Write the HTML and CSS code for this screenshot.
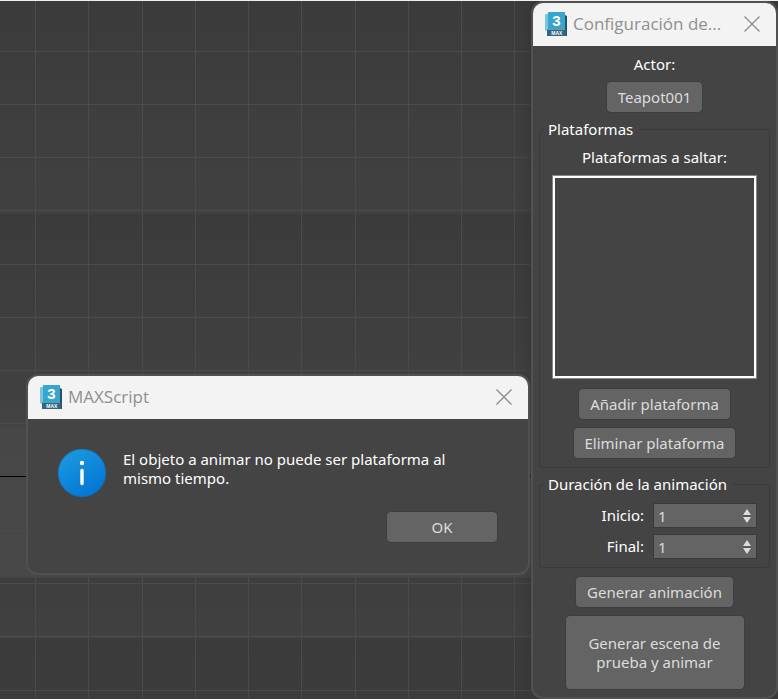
FILE: index.html
```html
<!DOCTYPE html>
<html lang="es">
<head>
<meta charset="utf-8">
<meta name="viewport" content="width=device-width, initial-scale=1">
<title>MAXScript</title>
<link rel="stylesheet" href="styles.css">
</head>
<body>
<main class="desktop">
  <svg class="grid" aria-hidden="true">
    <path class="grid-line" d="M35.500 0V2000M88.500 0V2000M142.500 0V2000M195.500 0V2000M248.500 0V2000M301.500 0V2000M355.500 0V2000M408.500 0V2000M461.500 0V2000M514.500 0V2000"/>
    <path class="grid-line" d="M0 51.500H4000M0 104.500H4000M0 157.500H4000M0 210.500H4000M0 264.500H4000M0 317.500H4000M0 370.500H4000M0 423.500H4000M0 530.500H4000M0 583.500H4000M0 636.500H4000M0 690.500H4000"/>
    <path class="grid-axis" d="M0 476.500H4000"/>
  </svg>

  <section class="window message" role="dialog" aria-labelledby="message-title">
    <header class="titlebar">
      <svg class="logo" viewBox="0 0 24 26" aria-hidden="true">
        <path d="M1 3.500l3-1v17H1z" fill="#7cc4dc"/>
        <path d="M4 1.500Q4 1 5 1H20.500q.5 0 .5.500V18.500H4z" fill="#37a5cc"/>
        <path d="M21 4l2 1V25H21z" fill="#22536a"/>
        <path d="M3 18.500H22V25H3z" fill="#336680"/>
        <text x="12.500" y="15" class="logo-digit">3</text>
        <text x="12.800" y="23.800" class="logo-word">MAX</text>
      </svg>
      <h1 class="title" id="message-title">MAXScript</h1>
      <button class="close" type="button" aria-label="Cerrar"><svg class="cross" viewBox="0 0 16 16"><path d="M.5.5l15 15M15.500.5l-15 15"/></svg></button>
    </header>
    <div class="message-body">
      <svg class="info" viewBox="0 0 48 48" aria-hidden="true">
        <defs>
          <linearGradient id="info-fill" x1="0.2" y1="0" x2="0.8" y2="1">
            <stop offset="0" stop-color="#1c9ae0"/>
            <stop offset="1" stop-color="#0273d4"/>
          </linearGradient>
        </defs>
        <circle cx="24" cy="24" r="24" fill="url(#info-fill)"/>
        <circle cx="24" cy="24" r="23.500" fill="none" stroke="#0668b4" stroke-opacity=".35"/>
        <circle cx="24" cy="14" r="2.200" fill="#fff"/>
        <path d="M24 21.500V34.500" stroke="#fff" stroke-width="3.400" stroke-linecap="round"/>
      </svg>
      <p class="message-text">El objeto a animar no puede ser plataforma al mismo tiempo.</p>
    </div>
    <div class="message-actions"><button class="btn ok" type="button">OK</button></div>
  </section>

  <section class="window panel" role="dialog" aria-labelledby="panel-title">
    <header class="titlebar">
      <svg class="logo" viewBox="0 0 24 26" aria-hidden="true">
        <path d="M1 3.500l3-1v17H1z" fill="#7cc4dc"/>
        <path d="M4 1.500Q4 1 5 1H20.500q.5 0 .5.500V18.500H4z" fill="#37a5cc"/>
        <path d="M21 4l2 1V25H21z" fill="#22536a"/>
        <path d="M3 18.500H22V25H3z" fill="#336680"/>
        <text x="12.500" y="15" class="logo-digit">3</text>
        <text x="12.800" y="23.800" class="logo-word">MAX</text>
      </svg>
      <h2 class="title" id="panel-title">Configuración de...</h2>
      <button class="close" type="button" aria-label="Cerrar"><svg class="cross" viewBox="0 0 16 16"><path d="M.5.5l15 15M15.500.5l-15 15"/></svg></button>
    </header>
    <form class="panel-body">
      <label class="caption" for="actor">Actor:</label>
      <button class="btn" id="actor" type="button">Teapot001</button>
      <fieldset class="group platforms">
        <legend class="legend">Plataformas</legend>
        <label class="caption" for="list">Plataformas a saltar:</label>
        <select class="list" id="list" size="8"></select>
        <button class="btn" type="button">Añadir plataforma</button>
        <button class="btn" type="button">Eliminar plataforma</button>
      </fieldset>
      <fieldset class="group duration">
        <legend class="legend">Duración de la animación</legend>
        <div class="field">
          <label for="start">Inicio:</label>
          <span class="spinner"><input class="number" id="start" type="number" value="1"><svg class="arrows" viewBox="0 0 8 16" aria-hidden="true"><path d="M4 1l4 6H0zM4 15l4-6H0z" fill="#dcdcdc"/><path d="M0 8h8" stroke="#4c4c4c"/></svg></span>
        </div>
        <div class="field">
          <label for="end">Final:</label>
          <span class="spinner"><input class="number" id="end" type="number" value="1"><svg class="arrows" viewBox="0 0 8 16" aria-hidden="true"><path d="M4 1l4 6H0zM4 15l4-6H0z" fill="#dcdcdc"/><path d="M0 8h8" stroke="#4c4c4c"/></svg></span>
        </div>
      </fieldset>
      <button class="btn generate" type="button">Generar animación</button>
      <button class="btn tall" type="button">Generar escena de prueba y animar</button>
    </form>
  </section>
</main>
</body>
</html>
```
FILE: styles.css
```css
* { box-sizing: border-box; }

body {
  margin: 0;
  background: #3c3c3c;
  color: #fff;
  font: 15px/19px "Noto Sans", sans-serif;
}

.desktop {
  position: relative;
  min-height: 100vh;
  overflow: hidden;
  border-top: 1px solid #f0f0f0;
  background: linear-gradient(#3b3b3b 0, #414141 212px, #3b3b3b 213px, #414141 400px, #444 427px, #474747 428px, #484848 576px, #3e3e3e 577px, #414141 637px, #3b3b3b 638px, #3c3c3c 100%);
}

.grid { position: absolute; top: -1px; left: 0; width: 100%; height: 100%; }
.grid-line { fill: none; stroke: #4b4b4b; }
.grid-axis { fill: none; stroke: #000; }

.window {
  position: absolute;
  display: flex;
  flex-direction: column;
  border: 2px solid #515151;
  border-radius: 12px;
  background: #444;
  overflow: hidden;
}

.message { left: 26px; top: 373px; z-index: 1; width: 504px; }
.panel { right: 0; top: 0; width: 247px; box-shadow: 0 0 16px #333; }

.titlebar {
  display: flex;
  align-items: center;
  height: 43px;
  padding: 0 16px 2px 11px;
  background: #f3f3f3;
}

.logo { width: 24px; height: 26px; flex: none; }
.logo-digit { font: bold 15px "Liberation Sans", sans-serif; fill: #fff; text-anchor: middle; }
.logo-word { font: bold 5px "Liberation Sans", sans-serif; fill: #fff; text-anchor: middle; }

.title {
  flex: 1;
  margin: 0 0 0 5px;
  color: #8f8f8f;
  font: 17px/24px "Open Sans", "Noto Sans", sans-serif;
  white-space: nowrap;
}

.close { display: flex; padding: 0; border: 0; background: none; }
.cross { width: 16px; height: 16px; fill: none; stroke: #8c8c8c; stroke-width: 1.3; }

.message-body { display: flex; gap: 17px; padding: 30px 30px 0; }
.info { width: 48px; height: 48px; flex: none; }
.message-text { margin: 1px 0 0; max-width: 340px; }
.message-actions { display: flex; justify-content: flex-end; padding: 14px 30px 30px; }

.btn {
  min-height: 32px;
  padding: 0 11px;
  border: 1px solid #3e3e3e;
  border-radius: 5px;
  background: #646464;
  color: #dcdcdc;
  font: inherit;
}
.ok { width: 112px; }

.panel-body {
  display: flex;
  flex-direction: column;
  align-items: center;
  padding: 9px 6px 7px;
}

.caption { margin-bottom: 7px; }

.group {
  display: flex;
  flex-direction: column;
  align-items: center;
  align-self: stretch;
  min-width: 0;
  margin: 7px 0 0;
  padding: 9px 12px 8px;
  border: 1px solid #3a3a3a;
  border-radius: 4px;
}
.legend { padding: 0 6px 0 4px; margin-left: -8px; }

.list {
  align-self: stretch;
  height: 204px;
  margin: 1px 0 9px;
  border: 3px solid #fff;
  outline: 1px solid #85858a;
  outline-offset: -1px;
  border-radius: 0;
  background: #444;
  color: #fff;
  font: inherit;
}
.platforms .btn + .btn { margin-top: 7px; }

.duration { gap: 6px; align-items: flex-end; }
.field { display: flex; align-items: center; gap: 9px; }
.spinner { position: relative; display: flex; width: 104px; }
.number {
  width: 100%;
  height: 25px;
  padding: 0 20px 0 4px;
  border: 1px solid #3a3a3a;
  background: #646464;
  color: #dcdcdc;
  font: inherit;
  appearance: textfield;
}
.number::-webkit-inner-spin-button { appearance: none; margin: 0; }
.arrows { position: absolute; right: 6px; top: 5px; width: 8px; height: 16px; pointer-events: none; }

.generate { margin: 8px 0 7px; }
.tall { width: 180px; min-height: 75px; padding: 0 20px; }
```
